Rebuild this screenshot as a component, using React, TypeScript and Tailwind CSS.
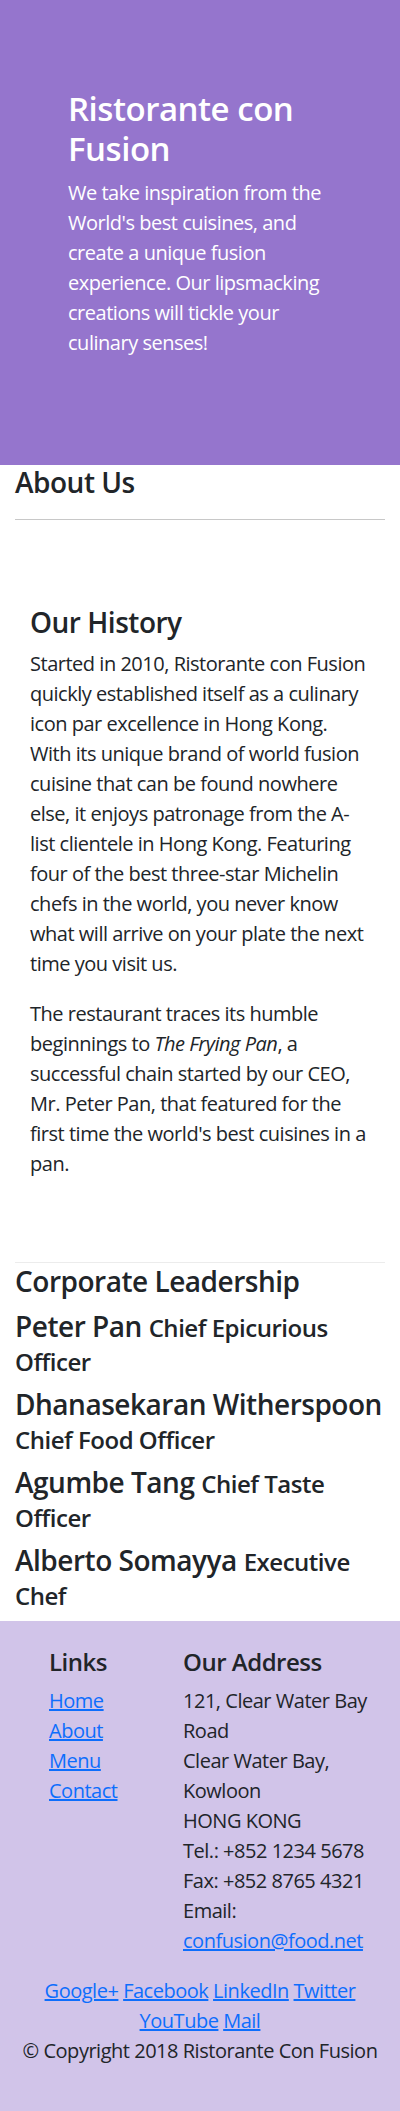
import React from "react";

const leaders: [string, string][] = [
  ["Peter Pan", "Chief Epicurious Officer"],
  ["Dhanasekaran Witherspoon", "Chief Food Officer"],
  ["Agumbe Tang", "Chief Taste Officer"],
  ["Alberto Somayya", "Executive Chef"],
];

const link = "text-[#0d6efd] underline";

export default function App() {
  return (
    <div className="font-['Open_Sans',sans-serif] tracking-[-0.03em] text-[#212529] bg-white">
      <header className="bg-[#9575CD] h-[465px] px-[68px] pt-[89px] text-white">
        <h1 className="text-[33px] leading-[40px] font-semibold">Ristorante con Fusion</h1>
        <p className="mt-[9px] text-[20px] leading-[30px]">
          We take inspiration from the World's best cuisines, and create a unique fusion experience. Our lipsmacking creations will tickle your culinary senses!
        </p>
      </header>

      <div className="px-[15px]">
        <h2 className="text-[28px] leading-[34px] font-semibold">About Us</h2>
        <hr className="mt-[20px] border-0 border-t border-[#c8c8c8]" />
      </div>

      <section className="px-[30px] pt-[85px]">
        <h2 className="text-[28px] leading-[34px] font-semibold">Our History</h2>
        <p className="mt-[10px] text-[20px] leading-[30px]">
          Started in 2010, Ristorante con Fusion quickly established itself as a culinary icon par excellence in Hong Kong. With its unique brand of world fusion cuisine that can be found nowhere else, it enjoys patronage from the A-list clientele in Hong Kong. Featuring four of the best three-star Michelin chefs in the world, you never know what will arrive on your plate the next time you visit us.
        </p>
        <p className="mt-[20px] text-[20px] leading-[30px]">
          The restaurant traces its humble beginnings to <em>The Frying Pan</em>, a successful chain started by our CEO, Mr. Peter Pan, that featured for the first time the world's best cuisines in a pan.
        </p>
      </section>

      <section className="px-[15px] pt-[83px] pb-[10px]">
        <hr className="border-0 border-t border-[#ececec]" />
        <h2 className="mt-[1px] text-[28px] leading-[34px] font-semibold">Corporate Leadership</h2>
        <div className="mt-[11px] flex flex-col gap-[10px]">
          {leaders.map(([name, title]) => (
            <div key={name} className="text-[28px] leading-[34px] font-semibold">
              {name} <span className="text-[24px] leading-none">{title}</span>
            </div>
          ))}
        </div>
      </section>

      <footer className="bg-[#D1C4E9] pt-[26px] pb-[45px]">
        <div className="flex">
          <div className="w-[133px] ml-[49px]">
            <h5 className="text-[24px] leading-[29px] font-semibold">Links</h5>
            <ul className="mt-[10px] text-[20px] leading-[30px]">
              <li><a href="#" className={link}>Home</a></li>
              <li><a href="#" className={link}>About</a></li>
              <li><a href="#" className={link}>Menu</a></li>
              <li><a href="#" className={link}>Contact</a></li>
            </ul>
          </div>
          <div className="ml-[1px] w-[202px]">
            <h5 className="text-[24px] leading-[29px] font-semibold">Our Address</h5>
            <address className="mt-[10px] not-italic text-[20px] leading-[30px]">
              121, Clear Water Bay Road<br />
              Clear Water Bay, Kowloon<br />
              HONG KONG<br />
              Tel.: +852 1234 5678<br />
              Fax: +852 8765 4321<br />
              Email: <a href="#" className={link}>confusion@food.net</a>
            </address>
          </div>
        </div>
        <div className="mt-[20px] px-[15px] text-center text-[20px] leading-[30px]">
          <div>
            <a href="#" className={link}>Google+</a>{" "}
            <a href="#" className={link}>Facebook</a>{" "}
            <a href="#" className={link}>LinkedIn</a>{" "}
            <a href="#" className={link}>Twitter</a>{" "}
            <a href="#" className={link}>YouTube</a>{" "}
            <a href="#" className={link}>Mail</a>
          </div>
          <p>© Copyright 2018 Ristorante Con Fusion</p>
        </div>
      </footer>
    </div>
  );
}
